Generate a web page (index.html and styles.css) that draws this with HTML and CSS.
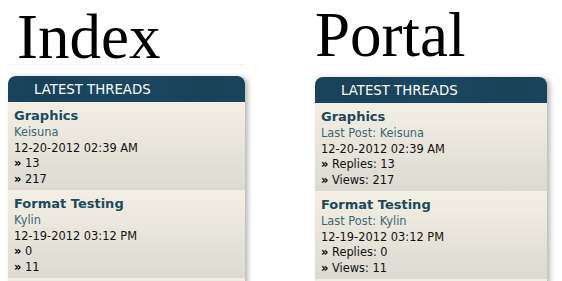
FILE: index.html
```html
<!DOCTYPE html>
<html lang="en">
<head>
  <meta charset="UTF-8">
  <title>Index / Portal</title>
  <link rel="stylesheet" href="styles.css">
</head>
<body>
  <div class="page">
    <div class="col col-index">
      <h1 class="title">Index</h1>
      <div class="panel">
        <div class="panel-head">LATEST THREADS</div>
        <div class="thread">
          <div class="thread-name">Graphics</div>
          <div class="thread-user">Keisuna</div>
          <div class="thread-line">12-20-2012 02:39 AM</div>
          <div class="thread-line"><b>»</b> 13</div>
          <div class="thread-line"><b>»</b> 217</div>
        </div>
        <div class="thread">
          <div class="thread-name">Format Testing</div>
          <div class="thread-user">Kylin</div>
          <div class="thread-line">12-19-2012 03:12 PM</div>
          <div class="thread-line"><b>»</b> 0</div>
          <div class="thread-line"><b>»</b> 11</div>
        </div>
        <div class="thread thread-empty"></div>
      </div>
    </div>

    <div class="col col-portal">
      <h1 class="title">Portal</h1>
      <div class="panel">
        <div class="panel-head">LATEST THREADS</div>
        <div class="thread">
          <div class="thread-name">Graphics</div>
          <div class="thread-user">Last Post: Keisuna</div>
          <div class="thread-line">12-20-2012 02:39 AM</div>
          <div class="thread-line"><b>»</b> Replies: 13</div>
          <div class="thread-line"><b>»</b> Views: 217</div>
        </div>
        <div class="thread">
          <div class="thread-name">Format Testing</div>
          <div class="thread-user">Last Post: Kylin</div>
          <div class="thread-line">12-19-2012 03:12 PM</div>
          <div class="thread-line"><b>»</b> Replies: 0</div>
          <div class="thread-line"><b>»</b> Views: 11</div>
        </div>
        <div class="thread thread-empty"></div>
      </div>
    </div>
  </div>
</body>
</html>
```

FILE: styles.css
```css
body {
  margin: 0;
  background: #ffffff;
  font-family: "DejaVu Sans", Verdana, sans-serif;
  overflow: hidden;
}
.page {
  display: flex;
  gap: 70px;
  padding: 5px 8px 0;
}
.col-index {
  width: 237px;
}
.col-portal {
  width: 232px;
  margin-top: -2px;
}
.title {
  margin: 0;
  height: 59px;
  font-family: "Liberation Serif", "Times New Roman", serif;
  font-weight: normal;
  font-size: 63px;
  line-height: 64px;
  color: #000;
}
.col-index .title {
  padding-left: 9px;
  border-bottom: 1px solid #f3f3f3;
}
.col-index .panel {
  margin-top: 11px;
}
.col-portal .panel {
  margin-top: 15px;
}
.panel {
  border-radius: 8px 8px 0 0;
  box-shadow: 3px 1px 5px rgba(0, 0, 0, 0.28);
}
.panel-head {
  height: 26px;
  line-height: 27px;
  padding-left: 26px;
  border-radius: 8px 8px 0 0;
  color: #ffffff;
  font-size: 13.3px;
  background:
    radial-gradient(circle at 15% 40%, rgba(0, 0, 0, 0.08), transparent 30%),
    radial-gradient(circle at 85% 30%, rgba(0, 0, 0, 0.08), transparent 30%),
    #1b465f;
}
.thread {
  height: 88px;
  box-sizing: border-box;
  padding: 5px 6px 3px;
  background: linear-gradient(to bottom, #f4efe2, #dcdad2);
}
.thread-empty {
  height: 20px;
}
.thread-name {
  font-size: 13px;
  font-weight: bold;
  line-height: 18px;
  color: #1a4a5f;
}
.thread-user,
.thread-line {
  font-size: 11.4px;
  line-height: 15.5px;
}
.thread-user {
  color: #3a6878;
}
.thread-line {
  color: #111;
}
.thread-line b {
  color: #000;
}
```
